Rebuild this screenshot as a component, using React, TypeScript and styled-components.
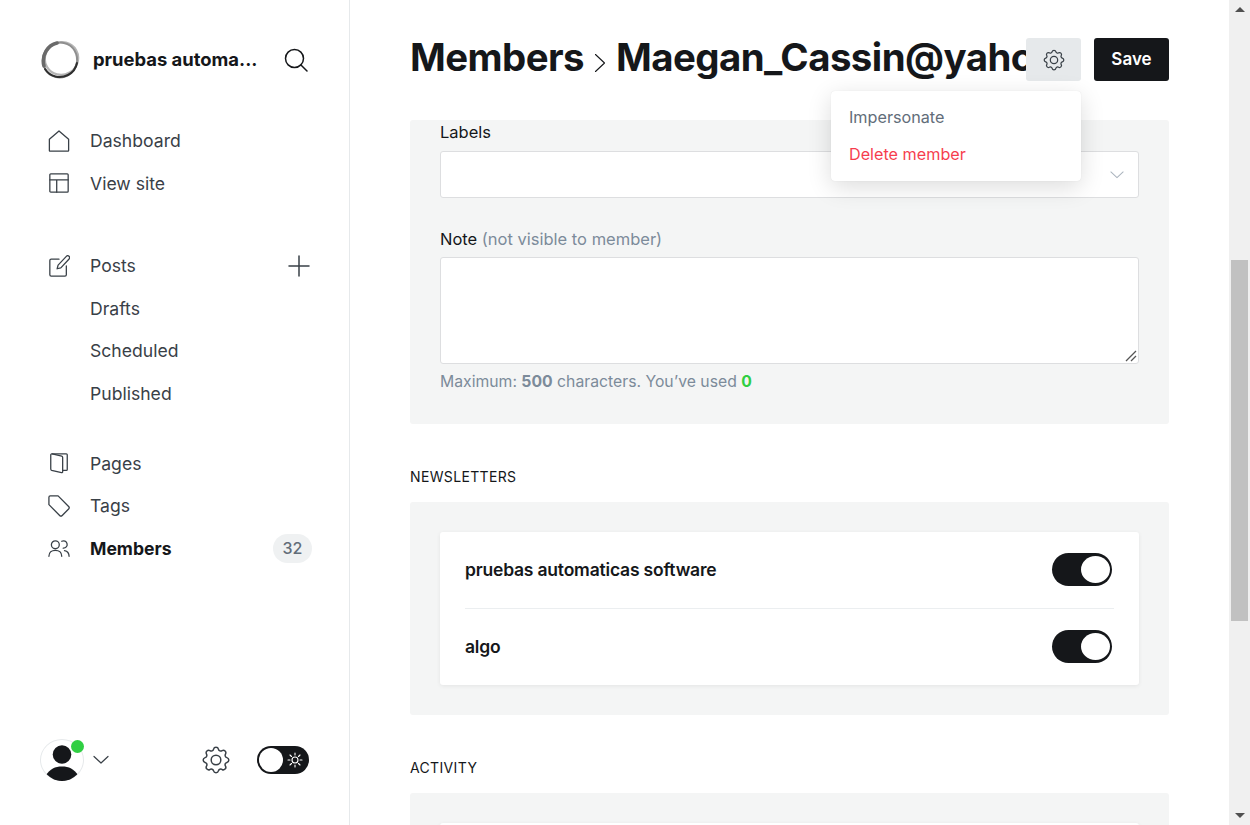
import styled, { createGlobalStyle } from 'styled-components';

const GlobalStyle = createGlobalStyle`
    html, body {
        margin: 0;
        padding: 0;
        background: #fff;
        overflow: hidden;
    }
    * {
        box-sizing: border-box;
    }
    body {
        font-family: Inter, "Liberation Sans", sans-serif;
        color: #15171a;
    }
`;

const Icon = ({ size = 24, width = 1.5, children }: { size?: number; width?: number; children: React.ReactNode }) => (
    <svg width={size} height={size} viewBox="0 0 24 24" fill="none" stroke="currentColor" strokeWidth={width} strokeLinecap="round" strokeLinejoin="round">
        {children}
    </svg>
);

const gearPath =
    'M10.3 4.3c.4-1.7 3-1.7 3.4 0a1.7 1.7 0 0 0 2.6 1.1c1.5-.9 3.3.8 2.4 2.4a1.7 1.7 0 0 0 1 2.5c1.8.5 1.8 3 0 3.4a1.7 1.7 0 0 0-1 2.6c.9 1.5-.9 3.3-2.4 2.4a1.7 1.7 0 0 0-2.6 1c-.4 1.8-3 1.8-3.4 0a1.7 1.7 0 0 0-2.6-1c-1.5.9-3.3-.9-2.4-2.4a1.7 1.7 0 0 0-1-2.6c-1.8-.4-1.8-2.9 0-3.4a1.7 1.7 0 0 0 1-2.5c-.9-1.6.9-3.3 2.4-2.4a1.7 1.7 0 0 0 2.6-1.1z';

const GearIcon = ({ size, width }: { size: number; width: number }) => (
    <Icon size={size} width={width}>
        <path d={gearPath} />
        <circle cx="12" cy="12" r="3.4" />
    </Icon>
);

const ChevronDown = ({ size = 16 }: { size?: number }) => (
    <svg width={size} height={size} viewBox="0 0 16 16" fill="none" stroke="currentColor" strokeWidth="1.2" strokeLinecap="round" strokeLinejoin="round">
        <path d="M1 4.5l7 6.5 7-6.5" />
    </svg>
);

const Logo = () => (
    <svg width="40" height="40" viewBox="0 0 40 40" fill="none">
        <ellipse cx="21.5" cy="18.5" rx="16.8" ry="16.2" stroke="#b5b5b5" strokeWidth="2.2" transform="rotate(-30 21.5 18.5)" />
        <ellipse cx="20" cy="20" rx="17" ry="17.5" stroke="#8f8f8f" strokeWidth="2" transform="rotate(25 20 20)" />
        <path d="M5 29c5 8 15 10 23 6 5-2.5 8-7 9-12" stroke="#2f2f2f" strokeWidth="2" strokeLinecap="round" />
        <path d="M4 26C1 15 8 5 17 3" stroke="#6a6a6a" strokeWidth="3.6" strokeLinecap="round" />
    </svg>
);

const navIcons: Record<string, React.ReactNode> = {
    home: <path d="M1.5 22.4V10.2L12 1l10.5 9.2v12.2a.6.6 0 0 1-.6.6H2.1a.6.6 0 0 1-.6-.6z" />,
    site: (
        <>
            <rect x="2" y="2" width="20" height="20" rx="1" />
            <path d="M2 8.5h20M9.5 8.5V22" />
        </>
    ),
    posts: (
        <>
            <path d="M12 4.5H3.5A1.5 1.5 0 0 0 2 6v15.5A1.5 1.5 0 0 0 3.5 23h15a1.5 1.5 0 0 0 1.5-1.5V12" />
            <path d="M20 1.5a2 2 0 0 1 3 2.8L14 14l-4 1 1-4z" />
        </>
    ),
    pages: (
        <>
            <path d="M4.5 2L15 4.6a1.5 1.5 0 0 1 1 1.4v15.5a1 1 0 0 1-1.3 1L4 20a1.5 1.5 0 0 1-1-1.4V3.5A1.3 1.3 0 0 1 4.5 2z" />
            <path d="M4.5 2H20a1 1 0 0 1 1 1v16a1 1 0 0 1-1 1h-4" />
        </>
    ),
    tags: <path d="M1 2.5A1.5 1.5 0 0 1 2.5 1H11l11.5 11.5a2 2 0 0 1 0 2.8l-7 7a2 2 0 0 1-2.8 0L1 10.5z" />,
    members: (
        <>
            <circle cx="8" cy="8.5" r="4.3" />
            <path d="M1 21c0-4.2 3.1-6.5 7-6.5s7 2.3 7 6.5" />
            <path d="M15 4.7a4 4 0 1 1 1.6 7.5M18 14.8c3 .6 5 2.8 5 6.2" />
        </>
    ),
};

const App = () => (
    <>
        <GlobalStyle />
        <Page>
            <Sidebar>
                <Brand>
                    <Logo />
                    <BrandName>pruebas automa...</BrandName>
                    <SearchButton>
                        <Icon size={24}>
                            <circle cx="10.5" cy="10.5" r="9" />
                            <path d="M17 17l6 6" />
                        </Icon>
                    </SearchButton>
                </Brand>

                <NavGroup $gap={40}>
                    <NavItem icon="home" label="Dashboard" />
                    <NavItem icon="site" label="View site" />
                </NavGroup>

                <NavGroup $gap={27.5}>
                    <NavItem icon="posts" label="Posts" extra={<PlusIcon />} />
                    <NavItem label="Drafts" />
                    <NavItem label="Scheduled" />
                    <NavItem label="Published" />
                </NavGroup>

                <NavGroup $gap={0}>
                    <NavItem icon="pages" label="Pages" />
                    <NavItem icon="tags" label="Tags" />
                    <NavItem icon="members" label="Members" active extra={<Count>32</Count>} />
                </NavGroup>

                <SidebarFooter>
                    <UserMenu>
                        <Avatar>
                            <svg width="42" height="42" viewBox="0 0 42 42">
                                <circle cx="21" cy="15.5" r="9.3" fill="#15171a" />
                                <path d="M5 36C9 30 14 27.5 21 27.5s12 2.5 16 8.5C33 40.5 27 42 21 42S9 40.5 5 36z" fill="#15171a" />
                            </svg>
                            <OnlineDot />
                        </Avatar>
                        <ChevronDown size={16} />
                    </UserMenu>
                    <FooterActions>
                        <GearIcon size={34} width={1.05} />
                        <ThemeToggle>
                            <ThemeKnob />
                            <svg width="16" height="16" viewBox="0 0 16 16" fill="none" stroke="#fff" strokeWidth="1.1" strokeLinecap="round">
                                <circle cx="8" cy="8" r="3" />
                                <path d="M8 1v2M8 13v2M1 8h2M13 8h2M3 3l1.5 1.5M11.5 11.5L13 13M3 13l1.5-1.5M11.5 4.5L13 3" />
                            </svg>
                        </ThemeToggle>
                    </FooterActions>
                </SidebarFooter>
            </Sidebar>

            <Main>
                <Header>
                    <Title>
                        Members
                        <Crumb>
                            <svg width="12" height="20" viewBox="0 0 12 20" fill="none" stroke="#15171a" strokeWidth="1.1" strokeLinecap="round" strokeLinejoin="round">
                                <path d="M1.5 1.5L10.5 10l-9 8.5" />
                            </svg>
                        </Crumb>
                        Maegan_Cassin@yahoo.com
                    </Title>
                    <SettingsButton>
                        <GearIcon size={26} width={1.15} />
                    </SettingsButton>
                    <SaveButton>Save</SaveButton>
                    <Dropdown>
                        <DropdownItem>Impersonate</DropdownItem>
                        <DropdownItem $danger>Delete member</DropdownItem>
                    </Dropdown>
                </Header>

                <FormCard>
                    <FieldLabel>Labels</FieldLabel>
                    <SelectBox>
                        <ChevronDown size={14} />
                    </SelectBox>
                    <NoteLabel>
                        Note <Muted>(not visible to member)</Muted>
                    </NoteLabel>
                    <NoteWrap>
                        <NoteArea />
                        <ResizeGrip>
                            <svg width="12" height="12" viewBox="0 0 12 12" fill="none" stroke="#555" strokeWidth="1.3">
                                <path d="M1 11L11 1M6 11l5-5" />
                            </svg>
                        </ResizeGrip>
                    </NoteWrap>
                    <Hint>
                        Maximum: <b>500</b> characters. You’ve used <Used>0</Used>
                    </Hint>
                </FormCard>

                <SectionTitle>NEWSLETTERS</SectionTitle>
                <GreyCard>
                    <WhiteCard>
                        <NewsletterRow>
                            <NewsletterName>pruebas automaticas software</NewsletterName>
                            <Switch />
                        </NewsletterRow>
                        <NewsletterRow>
                            <NewsletterName>algo</NewsletterName>
                            <Switch />
                        </NewsletterRow>
                    </WhiteCard>
                </GreyCard>

                <SectionTitle>ACTIVITY</SectionTitle>
                <GreyCard>
                    <WhiteCard />
                </GreyCard>
            </Main>

            <ScrollTrack>
                <ScrollArrow $up />
                <ScrollThumb />
                <ScrollArrow />
            </ScrollTrack>
        </Page>
    </>
);

const PlusIcon = () => (
    <PlusWrap>
        <svg width="22" height="22" viewBox="0 0 22 22" fill="none" stroke="currentColor" strokeWidth="1.5" strokeLinecap="round">
            <path d="M11 1v20M1 11h20" />
        </svg>
    </PlusWrap>
);

const NavItem = ({ icon, label, active, extra }: { icon?: string; label: string; active?: boolean; extra?: React.ReactNode }) => (
    <NavRow $active={active}>
        <NavIconBox>
            {icon && (
                <svg width="22" height="22" viewBox="0 0 24 24" fill="none" stroke="currentColor" strokeWidth="1.4" strokeLinecap="round" strokeLinejoin="round">
                    {navIcons[icon]}
                </svg>
            )}
        </NavIconBox>
        <NavLabel>{label}</NavLabel>
        {extra}
    </NavRow>
);

export default App;

const Page = styled.div`
    display: flex;
    width: 1250px;
    height: 825px;
    overflow: hidden;
`;

const Sidebar = styled.aside`
    flex: 0 0 350px;
    height: 825px;
    display: flex;
    flex-direction: column;
    padding: 40px 37px 44px 40px;
    border-right: 1px solid #e6e9eb;
`;

const Brand = styled.div`
    display: flex;
    align-items: center;
    height: 40px;
    margin-bottom: 39.7px;
`;

const BrandName = styled.div`
    flex: 1;
    margin-left: 13px;
    margin-top: -2px;
    font-size: 18.4px;
    font-weight: 700;
    color: #15171a;
    white-space: nowrap;
`;

const SearchButton = styled.div`
    display: flex;
    margin-right: 4px;
    color: #15171a;
`;

const NavGroup = styled.nav<{ $gap: number }>`
    display: flex;
    flex-direction: column;
    margin-bottom: ${(p) => p.$gap}px;
`;

const NavRow = styled.div<{ $active?: boolean }>`
    display: flex;
    align-items: center;
    height: 42.5px;
    font-size: 17.6px;
    font-weight: ${(p) => (p.$active ? 700 : 400)};
    color: ${(p) => (p.$active ? '#15171a' : '#394047')};
`;

const NavIconBox = styled.span`
    display: flex;
    justify-content: center;
    align-items: center;
    width: 38px;
    margin-right: 12px;
    color: #394047;
`;

const NavLabel = styled.span`
    flex: 1;
`;

const PlusWrap = styled.span`
    display: flex;
    color: #394047;
    margin-right: 2px;
`;

const Count = styled.span`
    display: flex;
    align-items: center;
    justify-content: center;
    width: 39px;
    height: 29px;
    border-radius: 15px;
    background: #eff1f2;
    color: #626d79;
    font-size: 16px;
    font-weight: 500;
`;

const SidebarFooter = styled.div`
    margin-top: auto;
    display: flex;
    align-items: center;
    justify-content: space-between;
    height: 42px;
`;

const UserMenu = styled.div`
    display: flex;
    align-items: center;
    gap: 9px;
    color: #394047;
`;

const Avatar = styled.div`
    position: relative;
    width: 44px;
    height: 42px;
    border-radius: 50%;
    border: 1px solid #e6e9eb;
    overflow: visible;

    svg {
        display: block;
        margin: -1px 0 0 0;
        clip-path: circle(21px at 21px 21px);
    }
`;

const OnlineDot = styled.span`
    position: absolute;
    top: 0;
    right: -1px;
    width: 13px;
    height: 13px;
    border-radius: 50%;
    background: #30cf43;
`;

const FooterActions = styled.div`
    display: flex;
    align-items: center;
    gap: 24px;
    color: #394047;
    margin-right: 3px;
`;

const ThemeToggle = styled.div`
    display: flex;
    align-items: center;
    justify-content: space-between;
    width: 52px;
    height: 28px;
    padding: 0 6px 0 2px;
    border-radius: 14px;
    background: #15171a;
`;

const ThemeKnob = styled.span`
    width: 24px;
    height: 24px;
    border-radius: 50%;
    background: #fff;
`;

const Main = styled.main`
    flex: 1;
    min-width: 0;
    padding: 38px 60px 0;
    height: 825px;
    overflow: hidden;
`;

const Header = styled.header`
    position: relative;
    display: flex;
    align-items: center;
    height: 43px;
    margin-bottom: 39px;
`;

const Title = styled.h2`
    flex: 1;
    min-width: 0;
    margin: -2px 0 0;
    font-size: 38.4px;
    line-height: 47px;
    font-weight: 700;
    letter-spacing: -0.55px;
    color: #15171a;
    white-space: nowrap;
    overflow: hidden;
`;

const Crumb = styled.span`
    display: inline-block;
    width: 32px;
    text-align: center;
    vertical-align: -2px;
    letter-spacing: 0;
`;

const SettingsButton = styled.button`
    display: flex;
    align-items: center;
    justify-content: center;
    width: 55px;
    height: 43px;
    padding: 0;
    border: 0;
    border-radius: 3px;
    background: #e6e9eb;
    color: #394047;
`;

const SaveButton = styled.button`
    width: 75px;
    height: 43px;
    margin-left: 13px;
    padding: 0 0 2px;
    border: 0;
    border-radius: 3px;
    background: #15171a;
    color: #fff;
    font-family: inherit;
    font-size: 17px;
    font-weight: 600;
`;

const Dropdown = styled.div`
    position: absolute;
    top: 53px;
    right: 88px;
    z-index: 5;
    width: 250px;
    height: 90px;
    padding: 7px 0;
    border-radius: 4px;
    background: #fff;
    box-shadow: 0 0 1px rgba(0, 0, 0, 0.12), 0 6px 24px rgba(0, 0, 0, 0.14);
`;

const DropdownItem = styled.div<{ $danger?: boolean }>`
    display: flex;
    align-items: center;
    height: 37px;
    padding: 0 18px;
    font-size: 16.2px;
    color: ${(p) => (p.$danger ? '#f50b23' : '#626d79')};
    opacity: ${(p) => (p.$danger ? 0.8 : 1)};
`;

const GreyCard = styled.section`
    padding: 30px;
    border-radius: 3px;
    background: #f4f5f5;
`;

const FormCard = styled(GreyCard)`
    height: 304px;
    padding: 0 30px;
`;

const FieldLabel = styled.div`
    height: 31px;
    padding-top: 3px;
    font-size: 16.5px;
    line-height: 19px;
    font-weight: 400;
    color: #15171a;
`;

const SelectBox = styled.div`
    display: flex;
    align-items: center;
    justify-content: flex-end;
    height: 47px;
    padding-right: 14px;
    border: 1px solid #dddee0;
    border-radius: 3px;
    background: #fff;
    color: #abb4be;
`;

const NoteLabel = styled(FieldLabel)`
    height: 59px;
    padding-top: 32px;
`;

const Muted = styled.span`
    color: #7c8b9a;
`;

const NoteWrap = styled.div`
    position: relative;
    height: 107px;
`;

const NoteArea = styled.textarea`
    display: block;
    width: 100%;
    height: 107px;
    border: 1px solid #dddee0;
    border-radius: 3px;
    background: #fff;
    outline: none;
    resize: none;
`;

const ResizeGrip = styled.span`
    position: absolute;
    right: 2px;
    bottom: 2px;
    display: flex;
    pointer-events: none;
`;

const Hint = styled.div`
    margin-top: 8px;
    font-size: 15.75px;
    line-height: 19px;
    color: #7c8b9a;

    b {
        font-weight: 700;
    }
`;

const Used = styled.b`
    color: #30cf43;
`;

const SectionTitle = styled.h4`
    height: 78px;
    margin: 0;
    padding: 44px 0 0;
    font-size: 14px;
    line-height: 17px;
    font-weight: 400;
    letter-spacing: 0.35px;
    color: #15171a;
`;

const WhiteCard = styled.div`
    min-height: 153px;
    padding: 0 25px;
    border-radius: 3px;
    background: #fff;
    box-shadow: 0 1px 4px rgba(0, 0, 0, 0.07);
`;

const NewsletterRow = styled.div`
    display: flex;
    align-items: center;
    justify-content: space-between;
    height: 76px;
    padding-bottom: 1px;

    & + & {
        height: 77px;
        border-top: 1px solid #ebeef0;
    }
`;

const NewsletterName = styled.div`
    font-size: 17.5px;
    font-weight: 600;
    letter-spacing: -0.2px;
    color: #15171a;
`;

const Switch = styled.span`
    position: relative;
    display: block;
    width: 60px;
    height: 33px;
    margin-right: 2px;
    border-radius: 17px;
    background: #15171a;

    &::after {
        content: '';
        position: absolute;
        top: 3px;
        right: 2px;
        width: 29px;
        height: 27px;
        border-radius: 50%;
        background: #fff;
    }
`;

const ScrollTrack = styled.div`
    flex: 0 0 21px;
    height: 825px;
    display: flex;
    flex-direction: column;
    background: #f0f0f0;
    padding-left: 2px;
`;

const ScrollThumb = styled.div`
    width: 17px;
    height: 361px;
    background: #c1c1c1;
`;

const ScrollArrow = styled.div<{ $up?: boolean }>`
    width: 17px;
    height: ${(p) => (p.$up ? 260 : 204)}px;
    display: flex;
    justify-content: center;
    padding-top: ${(p) => (p.$up ? 7 : 0)}px;
    align-items: ${(p) => (p.$up ? 'flex-start' : 'flex-end')};
    padding-bottom: ${(p) => (p.$up ? 0 : 7)}px;

    &::before {
        content: '';
        border-left: 5px solid transparent;
        border-right: 5px solid transparent;
        ${(p) => (p.$up ? 'border-bottom: 5px solid #505050;' : 'border-top: 5px solid #505050;')}
    }
`;
